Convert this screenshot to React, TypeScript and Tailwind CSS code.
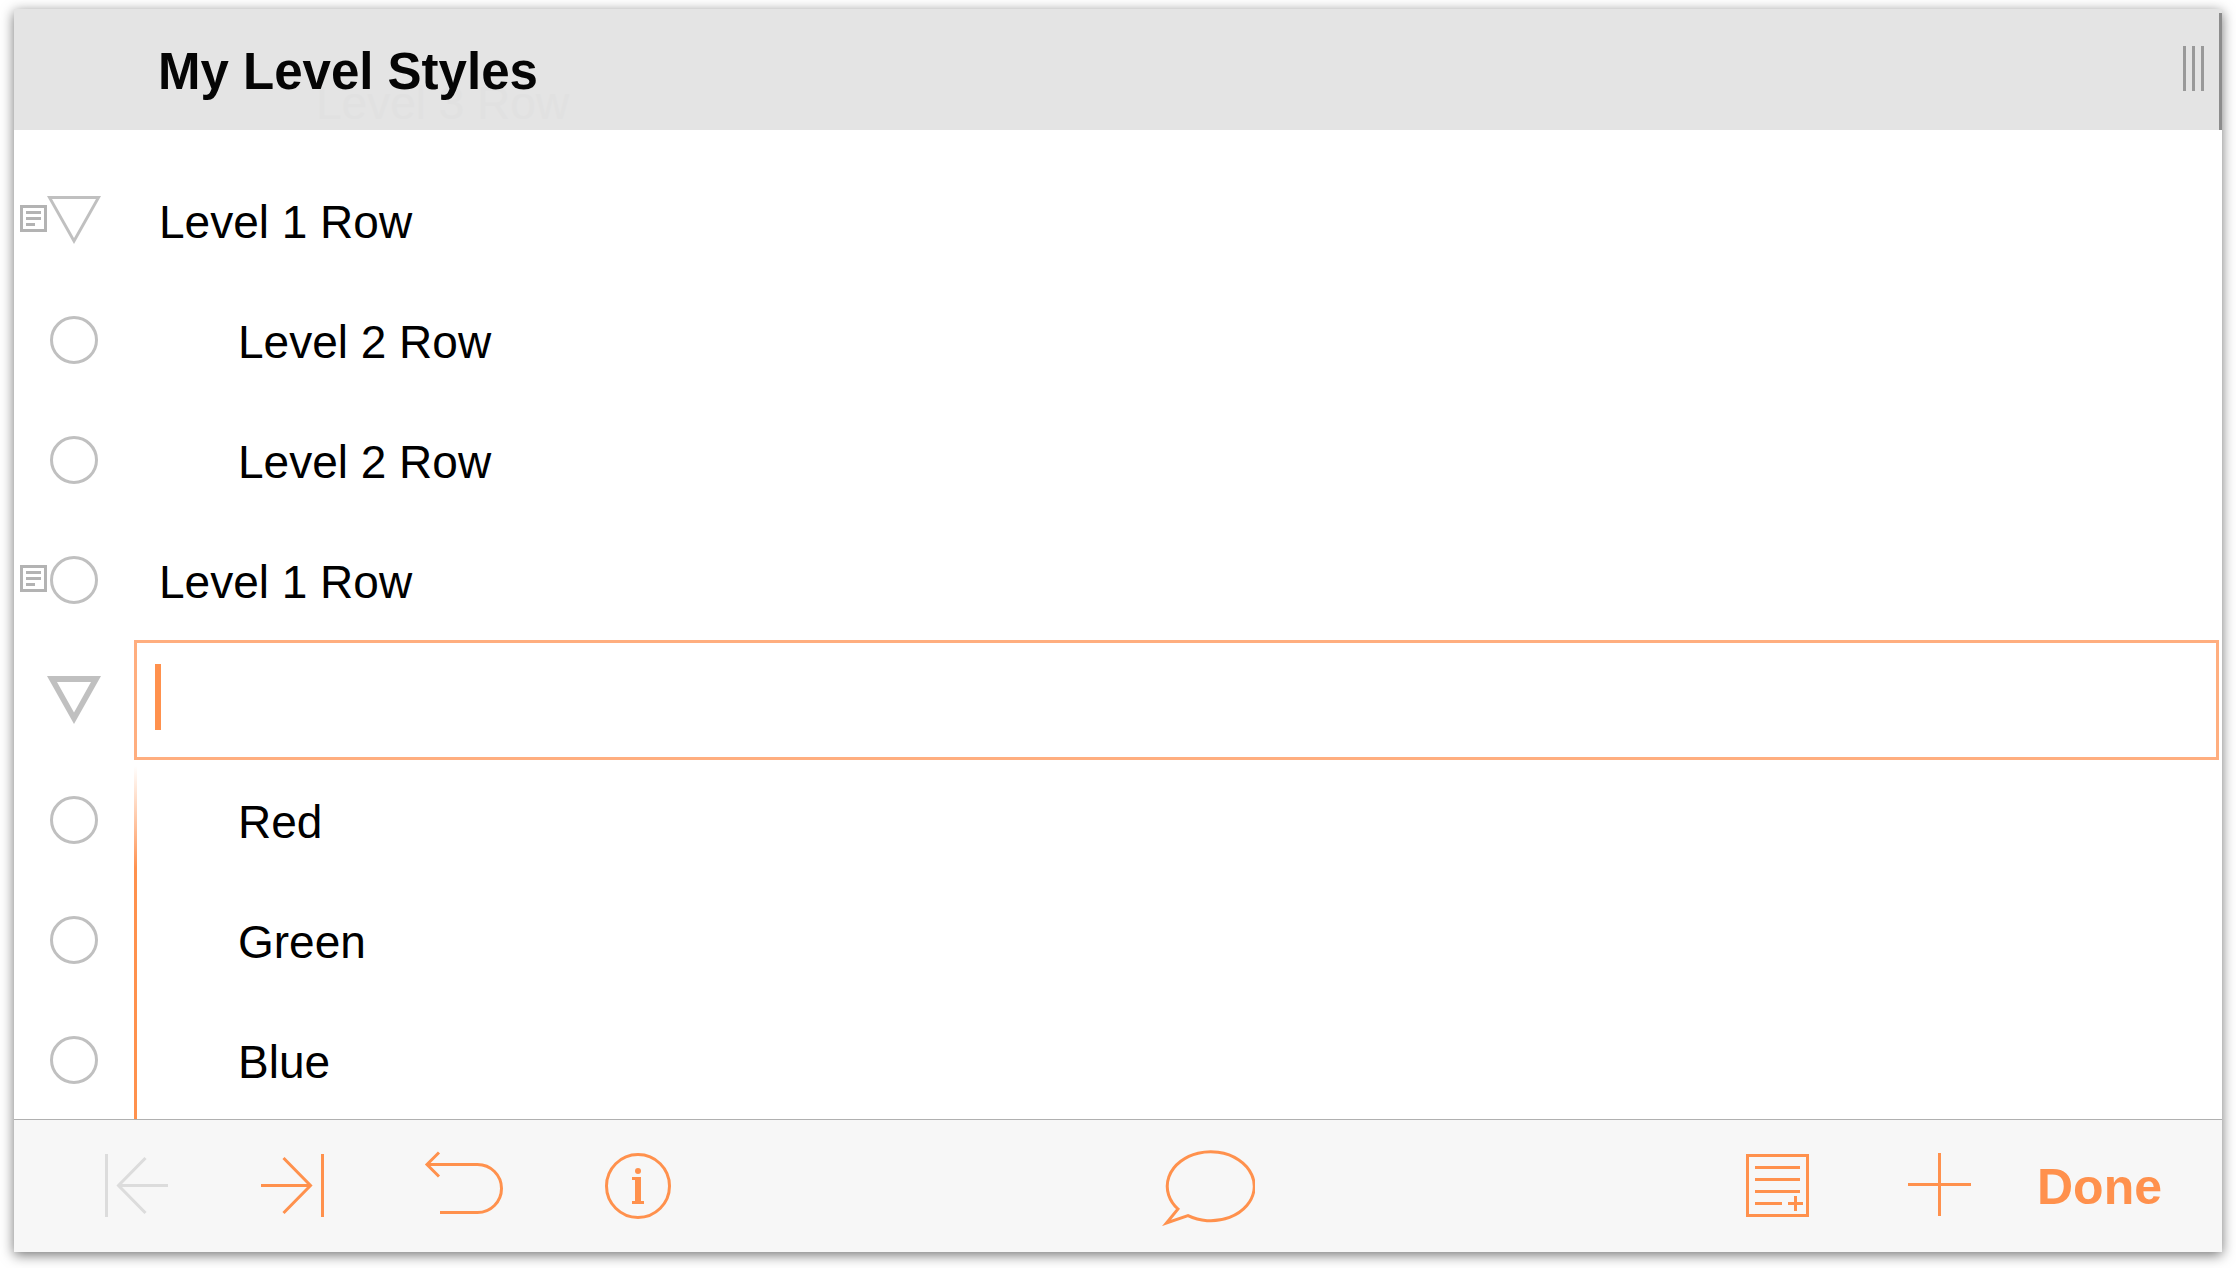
import React, { useState } from "react";

interface OutlineRow {
  text: string;
  level: number;
  note?: boolean;
  marker: "circle" | "triangle";
  guide?: "fade" | "solid";
}

const rows: OutlineRow[] = [
  { text: "Level 1 Row", level: 1, note: true, marker: "triangle" },
  { text: "Level 2 Row", level: 2, marker: "circle" },
  { text: "Level 2 Row", level: 2, marker: "circle" },
  { text: "Level 1 Row", level: 1, note: true, marker: "circle" },
];

const childRows: OutlineRow[] = [
  { text: "Red", level: 2, marker: "circle", guide: "fade" },
  { text: "Green", level: 2, marker: "circle", guide: "solid" },
  { text: "Blue", level: 2, marker: "circle", guide: "solid" },
];

function NoteIcon() {
  return (
    <svg width="27" height="30" viewBox="0 0 27 30" fill="none" stroke="#b3b3b3" strokeWidth="3">
      <rect x="1.5" y="1.5" width="24" height="24" />
      <path d="M6 7.5H21M6 13.5H21M6 19.5H15" />
    </svg>
  );
}

function CircleIcon() {
  return (
    <svg width="54" height="48" viewBox="0 0 54 48" fill="none" stroke="#c0c0c0" strokeWidth="3">
      <circle cx="27" cy="24" r="22.5" />
    </svg>
  );
}

function TriangleIcon({ bold }: { bold?: boolean }) {
  return (
    <svg width="54" height="48" viewBox="0 0 54 48" fill="#c0c0c0" fillRule="evenodd">
      {bold ? (
        <path d="M0 0H54L27 48ZM10 6L27 36.5L44 6Z" />
      ) : (
        <path d="M0 0H54L27 48ZM5 3L27 42L49 3Z" />
      )}
    </svg>
  );
}

// note badge + handle on the left of every row
function Gutter({ note, children }: { note?: boolean; children: React.ReactNode }) {
  return (
    <div className="flex w-[120px] shrink-0 items-center pl-[6px]">
      <div className="w-[27px]">
        {note && (
          <button type="button" aria-label="Show note" className="block">
            <NoteIcon />
          </button>
        )}
      </div>
      <button type="button" aria-label="Row handle" className="block">
        {children}
      </button>
    </div>
  );
}

function Row({ row }: { row: OutlineRow }) {
  return (
    <li className="flex h-[120px]">
      <Gutter note={row.note}>
        {row.marker === "circle" ? <CircleIcon /> : <TriangleIcon />}
      </Gutter>
      <div
        className={
          row.guide === "fade"
            ? "w-[3px] bg-linear-to-b from-white from-5% to-[#ff914d] to-90%"
            : row.guide === "solid"
              ? "w-[3px] bg-[#ff914d]"
              : "w-[3px]"
        }
      />
      <div
        className={`flex flex-1 items-center pt-1 text-[46px] ${
          row.level === 1 ? "pl-[22px]" : "pl-[101px]"
        }`}
      >
        {row.text}
      </div>
    </li>
  );
}

interface ToolButtonProps {
  label: string;
  width: number;
  disabled?: boolean;
  className?: string;
  children: React.ReactNode;
}

function ToolButton({ label, width, disabled, className = "", children }: ToolButtonProps) {
  return (
    <button
      type="button"
      aria-label={label}
      disabled={disabled}
      className={`block text-[#ff914d] disabled:text-[#dcdcdc] ${className}`}
    >
      <svg
        width={width}
        height="80"
        viewBox={`0 0 ${width} 80`}
        fill="none"
        stroke="currentColor"
        strokeWidth="3"
      >
        {children}
      </svg>
    </button>
  );
}

function Toolbar() {
  return (
    <footer className="relative -mt-px flex h-[133px] items-center justify-between border-t border-[#b0b0b0] bg-[#f7f7f7] pl-[91px] pr-[60px]">
      <div className="flex items-center gap-[93px]">
        <ToolButton label="Outdent" width={63} disabled>
          <path d="M1.5 8V71M63 39.5H13.5M40.5 12L13.5 39.5L40.5 67" />
        </ToolButton>
        <ToolButton label="Indent" width={63}>
          <path d="M61.5 8V71M0 39.5H49.5M22.5 12L49.5 39.5L22.5 67" />
        </ToolButton>
        <ToolButton label="Undo" width={95}>
          <path d="M22 6.5L10 18.5L22 30.5M10 18.5H60.5A24 24 0 0 1 60.5 66.5H23" />
        </ToolButton>
        <ToolButton label="Info" width={66}>
          <circle cx="33" cy="40" r="31.5" />
          <circle cx="33" cy="25" r="3" fill="currentColor" stroke="none" />
          <path d="M27 31H36V55H39V58H27V55H30V34H27Z" fill="currentColor" stroke="none" />
        </ToolButton>
      </div>

      <ToolButton label="Comment" width={93}>
        <path d="M26 69.7A43.5 34.5 0 1 0 16 63L4.5 77Z" />
      </ToolButton>

      <div className="flex items-center gap-[66px]">
        <ToolButton label="Add note" width={63}>
          <rect x="1.5" y="9.5" width="60" height="60" />
          <path d="M9 21.5H54M9 33.5H54M9 45.5H54M9 57.5H36M42 57.5H57M49.5 50V65" />
        </ToolButton>
        <ToolButton label="Add row" width={63} className="ml-[33px]">
          <path d="M0 38.5H63M31.5 7V70" />
        </ToolButton>
        <button type="button" className="pt-[2px] text-[50px] font-bold text-[#ff914d]">
          Done
        </button>
      </div>
    </footer>
  );
}

function App() {
  const [draft, setDraft] = useState<string>("");

  return (
    <div className="min-h-screen bg-white px-[14px] pb-4 pt-[9px] font-['Liberation_Sans',Arial,sans-serif] text-black">
      <div className="bg-white shadow-[0_3px_12px_rgba(0,0,0,0.55)]">
        <header className="relative flex h-[121px] items-center bg-[#e4e4e4]">
          {/* row scrolled under the translucent header */}
          <div
            aria-hidden="true"
            className="absolute bottom-0 left-[302px] text-[46px] leading-[54px] text-[#e1e1e1]"
          >
            Level 3 Row
          </div>
          <h1 className="relative flex-1 pl-[144px] pt-[6px] text-[51px] font-bold text-[#050505]">
            My Level Styles
          </h1>
          <button type="button" aria-label="Columns" className="mr-[15px] flex gap-[6px] pb-[2px]">
            <span className="h-[45px] w-[3px] bg-[#999]" />
            <span className="h-[45px] w-[3px] bg-[#999]" />
            <span className="h-[45px] w-[3px] bg-[#999]" />
          </button>
          <div className="mt-1 w-[3px] self-stretch bg-[#8c8c8c]" />
        </header>

        <ul className="pt-[30px]">
          {rows.map((row, index) => (
            <Row key={index} row={row} />
          ))}

          {/* row being edited */}
          <li className="flex h-[120px] pr-[3px]">
            <Gutter>
              <TriangleIcon bold />
            </Gutter>
            <div className="flex flex-1 items-center border-[3px] border-[#ffae7f] pl-[18px]">
              <span aria-hidden="true" className="mb-[6px] h-[66px] w-[6px] bg-[#ff914d]" />
              <input
                type="text"
                aria-label="Row text"
                value={draft}
                onChange={(e) => setDraft(e.target.value)}
                className="h-full flex-1 bg-transparent text-[46px] caret-transparent outline-none"
              />
            </div>
          </li>

          {childRows.map((row, index) => (
            <Row key={index} row={row} />
          ))}
        </ul>

        <Toolbar />
      </div>
    </div>
  );
}

export default App;
